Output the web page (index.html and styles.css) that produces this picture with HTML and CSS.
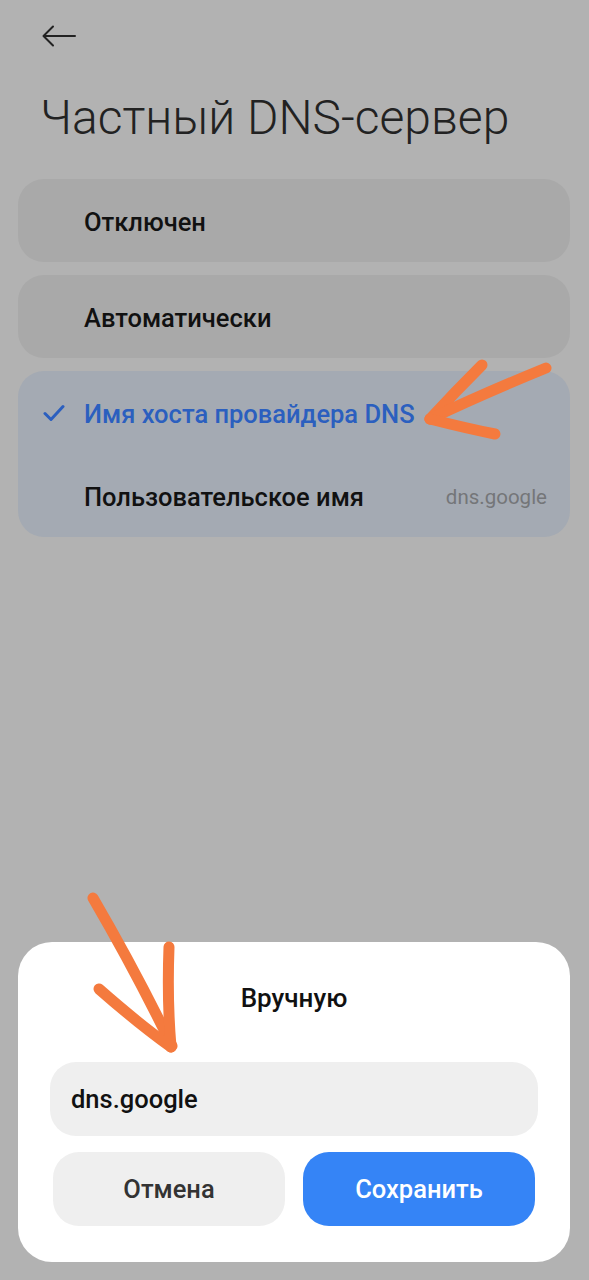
FILE: index.html
```html
<!DOCTYPE html>
<html lang="ru">
<head>
<meta charset="utf-8">
<link rel="stylesheet" href="styles.css">
</head>
<body>
<div class="screen">
  <header class="top">
    <svg class="back" width="34" height="22" viewBox="0 0 34 22"><path d="M33 11H2M11 1.5L1.5 11L11 20.5" fill="none" stroke="#222" stroke-width="2" stroke-linecap="round" stroke-linejoin="round"/></svg>
    <h1 class="title">Частный DNS-сервер</h1>
  </header>
  <div class="list">
    <div class="card"><div class="row"><span class="label">Отключен</span></div></div>
    <div class="card"><div class="row"><span class="label">Автоматически</span></div></div>
    <div class="card selected">
      <div class="row">
        <svg class="check" width="22" height="18" viewBox="0 0 22 18"><path d="M2 9.5L8 15.5L20 2.5" fill="none" stroke="#2b5fbf" stroke-width="3" stroke-linecap="round" stroke-linejoin="round"/></svg>
        <span class="label blue">Имя хоста провайдера DNS</span>
      </div>
      <div class="row">
        <span class="label">Пользовательское имя</span>
        <span class="value">dns.google</span>
      </div>
    </div>
  </div>
  <div class="dialog">
    <div class="dtitle">Вручную</div>
    <div class="input">dns.google</div>
    <div class="buttons">
      <div class="btn cancel">Отмена</div>
      <div class="btn save">Сохранить</div>
    </div>
  </div>
  <svg class="marks" width="589" height="1280" viewBox="0 0 589 1280">
    <g fill="none" stroke="#f47a3e" stroke-width="11" stroke-linecap="round" stroke-linejoin="round">
      <path d="M482 365 Q455 392 430 419"/>
      <path d="M546 368 Q480 395 430 419"/>
      <path d="M430 419 Q465 428 495 434"/>
      <path d="M93 898 Q135 970 172 1046"/>
      <path d="M169 947 Q167 1000 171 1047"/>
      <path d="M99 989 Q140 1025 171 1047"/>
    </g>
  </svg>
</div>
</body>
</html>
```
FILE: styles.css
```css
* { box-sizing: border-box; }
html, body { margin: 0; padding: 0; }
body {
  background: #b2b2b2;
  font-family: Roboto, "Noto Sans", sans-serif;
  color: #111;
}
.screen {
  position: relative;
  width: 589px;
  height: 1280px;
  display: flex;
  flex-direction: column;
  overflow: hidden;
}
.top {
  padding: 25px 0 0 42px;
  height: 179px;
}
.back { display: block; }
.title {
  margin: 43px 0 0 -2px;
  font-weight: 300;
  font-size: 48px;
  line-height: 56px;
  color: #222;
}
.list {
  display: flex;
  flex-direction: column;
  gap: 13px;
  padding: 0 19px 0 18px;
}
.card {
  background: #a9a9a9;
  border-radius: 26px;
}
.card.selected { background: #a4aab3; }
.row {
  height: 83px;
  display: flex;
  align-items: center;
  padding: 2px 23px 0 66px;
  position: relative;
}
.label {
  font-size: 25.5px;
  font-weight: 500;
  color: #111;
}
.label.blue { color: #2b5fbf; }
.check {
  position: absolute;
  left: 25px;
  top: 33px;
}
.value {
  margin-left: auto;
  font-size: 20.5px;
  color: #747679;
}
.dialog {
  margin: auto 19px 18px 18px;
  height: 320px;
  background: #fff;
  border-radius: 34px;
  padding: 39px 32px 36px;
  display: flex;
  flex-direction: column;
}
.dtitle {
  text-align: center;
  font-size: 26px;
  font-weight: 500;
  line-height: 34px;
  color: #111;
  height: 81px;
}
.input {
  height: 74px;
  background: #efefef;
  border-radius: 26px;
  display: flex;
  align-items: center;
  padding-left: 21px;
  font-size: 25.5px;
  font-weight: 500;
  color: #111;
}
.buttons {
  display: flex;
  gap: 18px;
  margin-top: 16px;
  padding: 0 3px;
}
.btn {
  flex: 1;
  height: 74px;
  border-radius: 26px;
  display: flex;
  align-items: center;
  justify-content: center;
  font-size: 25.5px;
  font-weight: 500;
}
.cancel { background: #efefef; color: #333; }
.save { background: #3584f6; color: #fff; }
.marks {
  position: absolute;
  left: 0;
  top: 0;
  pointer-events: none;
}
```
